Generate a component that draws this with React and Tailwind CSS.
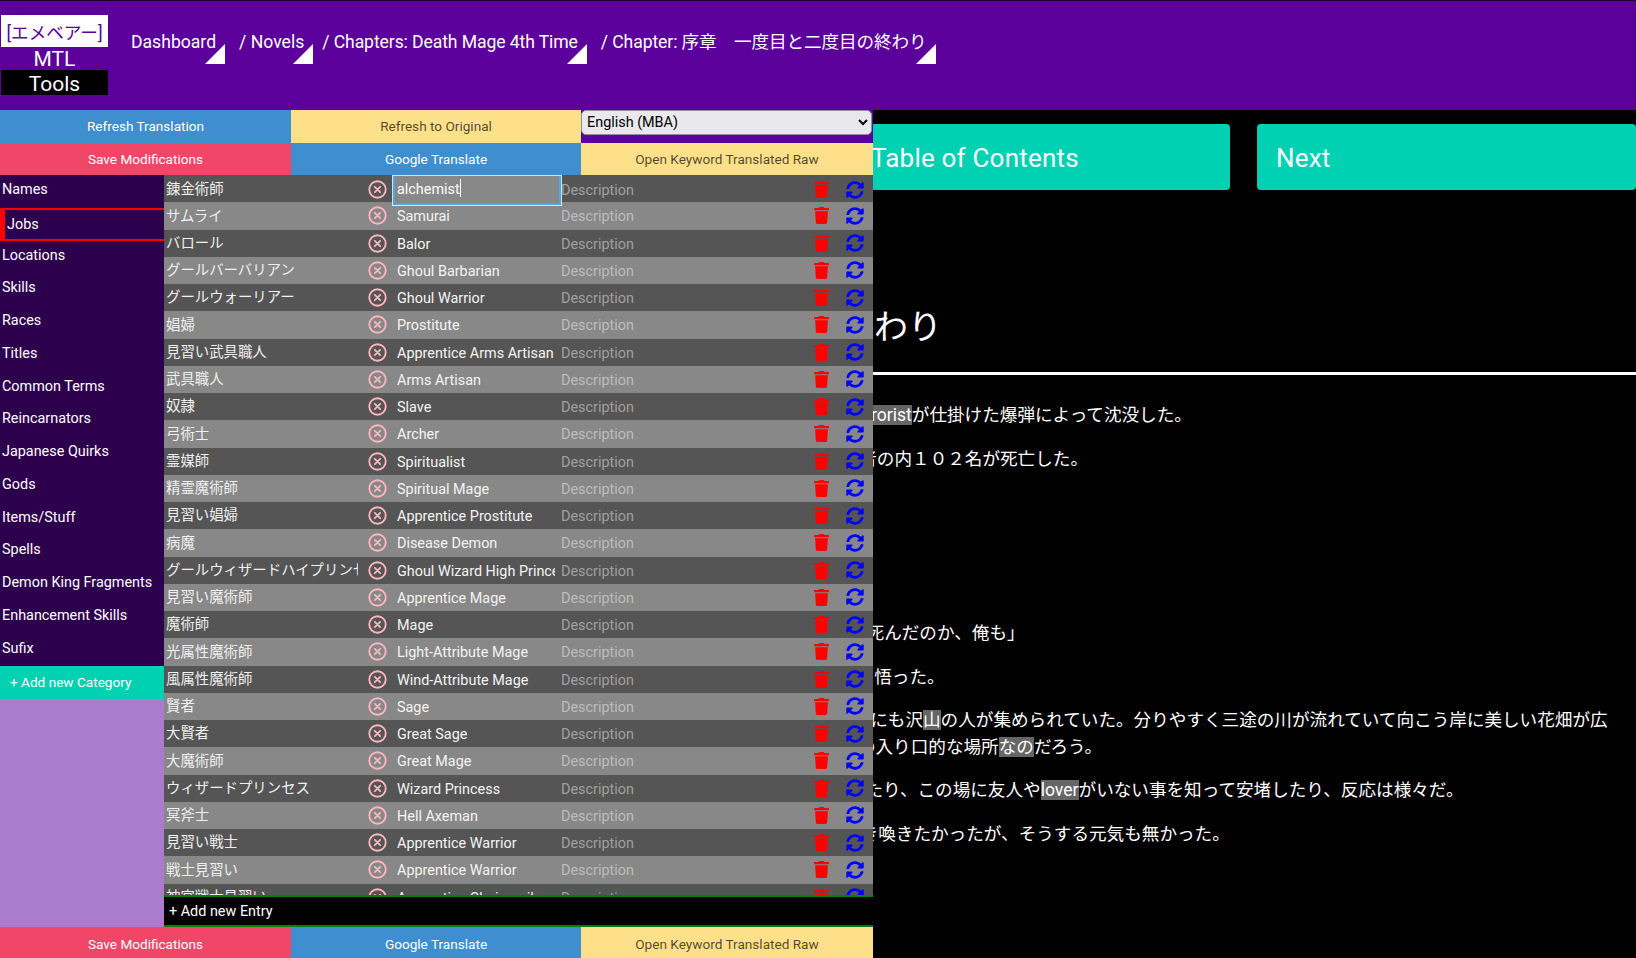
import { FaTrash, FaSyncAlt } from 'react-icons/fa';

const categories = [
  'Names', 'Jobs', 'Locations', 'Skills', 'Races', 'Titles', 'Common Terms', 'Reincarnators',
  'Japanese Quirks', 'Gods', 'Items/Stuff', 'Spells', 'Demon King Fragments', 'Enhancement Skills', 'Sufix',
];

const entries = [
  ['錬金術師', 'alchemist'],
  ['サムライ', 'Samurai'],
  ['バロール', 'Balor'],
  ['グールバーバリアン', 'Ghoul Barbarian'],
  ['グールウォーリアー', 'Ghoul Warrior'],
  ['娼婦', 'Prostitute'],
  ['見習い武具職人', 'Apprentice Arms Artisan'],
  ['武具職人', 'Arms Artisan'],
  ['奴隷', 'Slave'],
  ['弓術士', 'Archer'],
  ['霊媒師', 'Spiritualist'],
  ['精霊魔術師', 'Spiritual Mage'],
  ['見習い娼婦', 'Apprentice Prostitute'],
  ['病魔', 'Disease Demon'],
  ['グールウィザードハイプリンセス', 'Ghoul Wizard High Princess'],
  ['見習い魔術師', 'Apprentice Mage'],
  ['魔術師', 'Mage'],
  ['光属性魔術師', 'Light-Attribute Mage'],
  ['風属性魔術師', 'Wind-Attribute Mage'],
  ['賢者', 'Sage'],
  ['大賢者', 'Great Sage'],
  ['大魔術師', 'Great Mage'],
  ['ウィザードプリンセス', 'Wizard Princess'],
  ['冥斧士', 'Hell Axeman'],
  ['見習い戦士', 'Apprentice Warrior'],
  ['戦士見習い', 'Apprentice Warrior'],
  ['神官戦士見習い', 'Apprentice Chainmail'],
];

const Mark = ({ children }) => <span className="bg-[#666]">{children}</span>;

const ActionButton = ({ color, children, className = '' }) => (
  <button type="button" className={`flex items-center justify-center text-[13.6px] ${color} ${className}`}>
    {children}
  </button>
);

const Crumb = ({ label, className = '' }) => (
  <div className={`flex items-start ${className}`}>
    <span className="whitespace-pre text-[17.6px] leading-[26px]">{label}</span>
    <span className="ml-[-11px] mt-[15px] h-0 w-0 border-b-[20px] border-l-[20px] border-b-white border-l-transparent" />
  </div>
);

const RemoveIcon = () => (
  <svg width="19" height="19" viewBox="0 0 24 24" fill="none" stroke="#ffb6c1" strokeWidth="2.3" strokeLinecap="round">
    <circle cx="12" cy="12" r="10.4" />
    <path d="M8.6 8.6l6.8 6.8M15.4 8.6l-6.8 6.8" />
  </svg>
);

const EntryRow = ({ jp, en, index }) => {
  const first = index === 0;
  return (
    <div className={`grid h-[27.25px] shrink-0 grid-cols-[194px_35px_168px_1fr_34px_34px] items-center ${index % 2 === 0 ? 'bg-[#555]' : 'bg-[#888]'}`}>
      <div className="overflow-hidden whitespace-nowrap pl-[2px] pt-[1px] text-[14.4px] text-[#f0f0f0]">{jp}</div>
      <div className="flex items-center justify-center pl-[3px]">
        <RemoveIcon />
      </div>
      {first ? (
        <div className="relative z-10 h-[29px] translate-y-[1px] border-2 border-t-0 border-[#48a9e6] bg-[#888] outline outline-1 outline-white/80">
          <input autoFocus readOnly value={en} className="h-full w-full bg-transparent pl-[2px] text-[14.4px] text-white focus:outline-none" />
          <span className="absolute left-[65px] top-[3px] h-[18px] w-px bg-white" />
        </div>
      ) : (
        <div className="h-full min-w-0 overflow-hidden pr-[6px]">
          <input readOnly value={en} className="h-full w-full bg-transparent pl-[4px] pt-[2px] text-[14.4px] text-[#f4f4f4]" />
        </div>
      )}
      <input readOnly placeholder="Description" className="h-full min-w-0 bg-transparent pt-[2px] text-[14.4px] placeholder:text-white/45" />
      <div className="flex items-center justify-center pr-[1px] text-[#ff0000]">
        <FaTrash size={17} />
      </div>
      <div className="flex items-center justify-center pr-[3px] text-[#0000ff]">
        <FaSyncAlt size={18} />
      </div>
    </div>
  );
};

export default function App() {
  return (
    <div className="relative h-[958px] overflow-hidden bg-black font-['Roboto','Noto_Sans_CJK_JP',sans-serif] text-white">
      <header className="flex h-[110px] items-start border-t border-[#1c0033] bg-[#5c009c]">
        <div className="ml-[1px] mt-[14px] flex w-[107px] flex-col text-center text-[21px] leading-[24px]">
          <div className="flex h-[32px] items-center justify-center whitespace-nowrap bg-white pt-[3px] text-[17.6px] text-[#5c009c]">[エメベアー]</div>
          <div className="h-[23px] pt-[1px] leading-[23px]">MTL</div>
          <div className="h-[25px] bg-black pt-[2px] leading-[25px]">Tools</div>
        </div>
        <nav className="ml-[23px] mt-[28px] flex">
          <Crumb label="Dashboard" />
          <Crumb label="/ Novels" className="ml-[14px]" />
          <Crumb label="/ Chapters: Death Mage 4th Time" className="ml-[9px] tracking-[-0.1px]" />
          <Crumb label="/ Chapter: 序章　一度目と二度目の終わり" className="ml-[14px] tracking-[-0.1px]" />
        </nav>
      </header>

      <main>
        <div className="mt-[14px] flex justify-end gap-[27px]">
          <a className="flex h-[66px] w-[378px] items-center rounded bg-[#00d1b2] px-[19px] pt-[2px] text-[26px] tracking-[0.2px]">Table of Contents</a>
          <a className="flex h-[66px] w-[379px] items-center rounded bg-[#00d1b2] px-[19px] pt-[2px] text-[26px] tracking-[0.2px]">Next</a>
        </div>

        <h1 className="mt-[113px] whitespace-nowrap pl-[466px] text-[34px] leading-[48px]">序章　一度目と二度目の終わり</h1>
        <hr className="mt-[21px] border-t-[3px] border-white" />

        <div className="mt-[27px] px-[15px] text-[17.6px] leading-[26.4px] [&>p]:mb-[17.2px] [&>p]:whitespace-nowrap">
          <p className="indent-[9px]">修学旅行に向かう天宮博人達を乗せたそのフェリーは、日本を出港してから数時間後に、凶悪な過激派の<Mark>terrorist</Mark>が仕掛けた爆弾によって沈没した。</p>
          <p className="indent-[1px]">フェリーには修学旅行中の生徒や教師、一般の乗客を合わせて多くの人間が乗っていたが、その全ての乗船者の内１０２名が死亡した。</p>
          <p>天宮博人もその死者の一人だった。</p>
          <p>気が付くと、博人は何もない場所に立っていた。</p>
          <p>身体は半透明で、足元には何もない。</p>
          <p className="indent-[18px]">周囲を見回した博人は、自分の身体が透けている事に気が付き、思わず呟いた。「ああ、そうか、そうだ、死んだのか、俺も」</p>
          <p className="indent-[1px]">そして、自分が死んだ事を、周囲の様子から天宮博人は何となくではあるが少しずつはっきりと、確かにそう悟った。</p>
          <p className="indent-[13px]">
            気が付くと博人は薄暗い霧の中に立っていて、周囲には博人と同じフェリーの乗客の他、見知らぬ大勢の人にも沢<Mark>山</Mark>の人が集められていた。分りやすく三途の川が流れていて向こう岸に美しい花畑が広
            <br />
            がる、まるで絵に描いたような光景で、誰が見てもここはおそらく死後の世界、あるいはあの世へ向かう為の入り口的な場所<Mark>なの</Mark>だろう。
          </p>
          <p className="indent-[8px]">周囲の人々の反応は様々で、泣き叫んだり、自分の死を受け入れられずに呆然としたり、ただただ怒り狂ったり、この場に友人や<Mark>lover</Mark>がいない事を知って安堵したり、反応は様々だ。</p>
          <p className="indent-[5px]">博人も周囲の人々と同じように、自分を殺したテロリストに対して怒りをぶつけ、運命を嘆き、大声で、泣き喚きたかったが、そうする元気も無かった。</p>
        </div>
      </main>

      <div className="absolute bottom-0 left-0 top-[110px] flex w-[873px] flex-col bg-[#5c009c]">
        <div className="grid h-[33px] shrink-0 grid-cols-[291px_290px_292px]">
          <ActionButton color="bg-[#3e8ed0] text-white">Refresh Translation</ActionButton>
          <ActionButton color="bg-[#ffe08a] text-black/70">Refresh to Original</ActionButton>
          <select className="h-[25px] w-[291px] rounded-[5px] border border-[#8f8f9d] bg-[#e9e9ed] px-px text-[14.4px] text-black">
            <option>English (MBA)</option>
          </select>
        </div>
        <div className="grid h-[32px] shrink-0 grid-cols-[291px_290px_292px]">
          <ActionButton color="bg-[#f14668] text-white">Save Modifications</ActionButton>
          <ActionButton color="bg-[#3e8ed0] text-white">Google Translate</ActionButton>
          <ActionButton color="bg-[#ffe08a] text-black/70">Open Keyword Translated Raw</ActionButton>
        </div>

        <div className="flex min-h-0 flex-1">
          <aside className="flex w-[164px] shrink-0 flex-col bg-[#ac7ccc]">
            <ul className="bg-[#2d004d] text-[14.4px]">
              {categories.map((name) =>
                name === 'Jobs' ? (
                  <li key={name} className="flex h-[32.75px] items-center whitespace-nowrap border-y-2 border-l-[5px] border-[#ff0000] pl-[2px] pt-[1px]">{name}</li>
                ) : (
                  <li key={name} className="flex h-[32.75px] items-center whitespace-nowrap pb-[3px] pl-[2px]">{name}</li>
                ),
              )}
            </ul>
            <button type="button" className="h-[33px] bg-[#00d1b2] pb-[2px] pl-[10px] text-left text-[13.6px]">+ Add new Category</button>
          </aside>

          <section className="flex min-w-0 flex-1 flex-col bg-black">
            <div className="flex h-[720px] flex-col overflow-hidden">
              {entries.map(([jp, en], i) => (
                <EntryRow key={`${jp}-${i}`} jp={jp} en={en} index={i} />
              ))}
            </div>
            <button type="button" className="h-[32px] border-y-2 border-[#008000] bg-black pl-[5px] pt-[2px] text-left text-[14.4px]">+ Add new Entry</button>
          </section>
        </div>

        <div className="grid h-[31px] shrink-0 grid-cols-[291px_290px_292px]">
          <ActionButton color="bg-[#f14668] text-white" className="pt-[3px]">Save Modifications</ActionButton>
          <ActionButton color="bg-[#3e8ed0] text-white" className="pt-[3px]">Google Translate</ActionButton>
          <ActionButton color="bg-[#ffe08a] text-black/70" className="pt-[3px]">Open Keyword Translated Raw</ActionButton>
        </div>
      </div>
    </div>
  );
}
